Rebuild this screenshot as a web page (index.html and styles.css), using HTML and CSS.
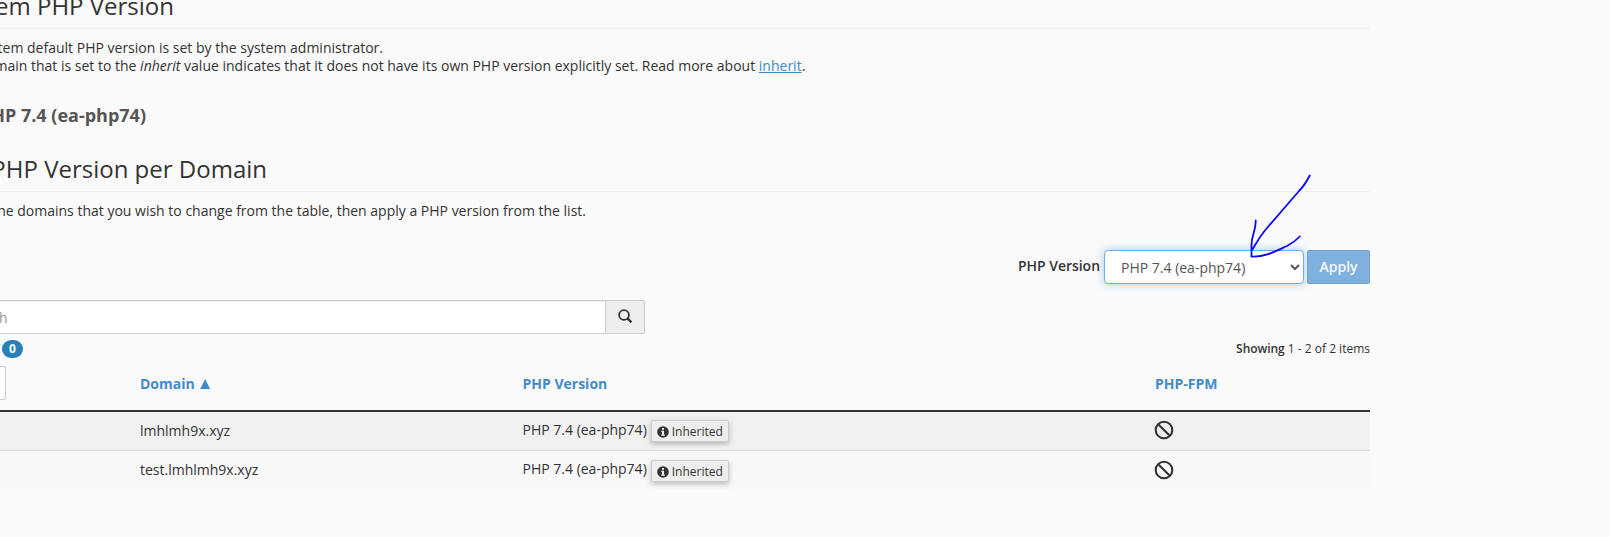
FILE: index.html
```html
<!DOCTYPE html>
<html lang="en">
<head>
<meta charset="utf-8">
<title>MultiPHP Manager</title>
<link rel="stylesheet" href="styles.css">
</head>
<body>
<main class="content">
  <h2 class="heading heading-system"><span>em PHP Version</span></h2>
  <p class="intro intro-default"><span>tem default PHP version is set by the system administrator.</span></p>
  <p class="intro intro-inherit"><span>main that is set to the <em>inherit</em> value indicates that it does not have its own PHP version explicitly set. Read more about <a href="#">inherit</a>.</span></p>
  <h4 class="current"><span>HP 7.4 (ea-php74)</span></h4>
  <h2 class="heading heading-domain"><span>PHP Version per Domain</span></h2>
  <p class="intro intro-select"><span>he domains that you wish to change from the table, then apply a PHP version from the list.</span></p>

  <div class="apply-bar">
    <label class="apply-label" for="version">PHP Version</label>
    <select class="version-select" id="version"><option>PHP 7.4 (ea-php74)</option></select>
    <button class="apply-button" type="button">Apply</button>
  </div>

  <div class="search">
    <div class="search-field"><span>h</span></div>
    <div class="search-button">
      <svg width="14" height="14" viewBox="0 0 14 14" fill="none" stroke="#333"><circle cx="6" cy="6" r="4.9" stroke-width="1.8"/><path d="M9.4 9.4l4 4" stroke-width="2.3"/></svg>
    </div>
  </div>

  <div class="status">
    <span class="badge">0</span>
    <span class="showing"><b>Showing</b> 1 - 2 of 2 items</span>
  </div>

  <div class="row table-head">
    <div class="cell"><div class="select-all"></div></div>
    <div class="cell">Domain <svg class="sort" width="11" height="10" viewBox="0 0 11 10"><path d="M5.2 0l4.9 10H.2z" fill="#428bca"/></svg></div>
    <div class="cell">PHP Version</div>
    <div class="cell">PHP-FPM</div>
  </div>
  <div class="row row-odd">
    <div class="cell"></div>
    <div class="cell">lmhlmh9x.xyz</div>
    <div class="cell version"><span>PHP 7.4 (ea-php74)</span>
      <span class="inherited"><svg width="12" height="12" viewBox="0 0 12 12"><circle cx="6" cy="6" r="5.8" fill="#333"/><path d="M5 2h2v1.7H5zM4.3 4.8H7v3.7h.8v1.2H4.3V8.5H5V6h-.7z" fill="#eee"/></svg>Inherited</span></div>
    <div class="cell fpm"><svg width="20" height="20" viewBox="0 0 20 20" fill="none" stroke="#333" stroke-width="2.1"><circle cx="10" cy="10" r="8.3"/><path d="M4.2 4.2l11.6 11.6"/></svg></div>
  </div>
  <div class="row row-even">
    <div class="cell"></div>
    <div class="cell">test.lmhlmh9x.xyz</div>
    <div class="cell version"><span>PHP 7.4 (ea-php74)</span>
      <span class="inherited"><svg width="12" height="12" viewBox="0 0 12 12"><circle cx="6" cy="6" r="5.8" fill="#333"/><path d="M5 2h2v1.7H5zM4.3 4.8H7v3.7h.8v1.2H4.3V8.5H5V6h-.7z" fill="#eee"/></svg>Inherited</span></div>
    <div class="cell fpm"><svg width="20" height="20" viewBox="0 0 20 20" fill="none" stroke="#333" stroke-width="2.1"><circle cx="10" cy="10" r="8.3"/><path d="M4.2 4.2l11.6 11.6"/></svg></div>
  </div>
</main>
<svg class="arrow" width="70" height="90" viewBox="1245 170 70 90" fill="none" stroke="#0d05fa" stroke-width="1.8" stroke-linecap="round" stroke-linejoin="round"><path d="M1309.7 175.5C1306 183 1304 186 1299 191L1267 228C1260 236 1257 242 1252 250M1255.7 220.5C1256 231 1251.500 235 1251.500 245L1251.500 256.500C1266 257 1277 250.500 1287 246C1293 243 1296 240.500 1299.800 236.500"/></svg>
</body>
</html>
```
FILE: styles.css
```css
* { box-sizing: border-box; }
body {
  margin: 0;
  height: 537px;
  overflow: hidden;
  background: #fafafa;
  color: #333;
  font: 14px/18px "Open Sans", sans-serif;
}
.content { width: 1370px; }
a { color: #428bca; }
h2, h4, p { margin: 0; }

/* Lines scrolled off the left edge keep their right end in place */
.heading, .intro, .current, .search-field {
  display: flex;
  white-space: nowrap;
}
.heading > span, .intro > span, .current > span {
  display: flex;
  justify-content: flex-end;
  white-space: pre;
}
.heading {
  font-size: 24px;
  line-height: 26px;
  font-weight: 400;
  border-bottom: 1px solid #eee;
}
.heading-system { height: 29px; margin-bottom: 10px; align-items: flex-end; padding-bottom: 9px; }
.heading-system > span { width: 174px; }
.intro-default > span { width: 383px; }
.intro-inherit > span { display: block; margin-left: -5.500px; }
.current { padding-top: 30px; font-size: 18px; line-height: 20px; color: #555; font-weight: 700; }
.current > span { width: 146px; }
.heading-domain { margin-top: 31px; height: 36px; }
.heading-domain > span { width: 267px; }
.intro-select { margin-top: 10px; }
.intro-select > span { width: 586px; }

.apply-bar {
  display: flex;
  justify-content: flex-end;
  margin-top: 30px;
  height: 34px;
}
.apply-label { font-weight: 600; letter-spacing: -.03px; margin: 7px 4px 0 0; }
.version-select {
  width: 200px;
  height: 34px;
  margin-right: 3px;
  padding: 6px 12px;
  border: 1px solid #66afe9;
  border-radius: 4px;
  background: #fff;
  color: #555;
  font: inherit;
  box-shadow: 0 0 8px rgba(102, 175, 233, .6);
}
.apply-button {
  width: 63px;
  padding: 0;
  border: 1px solid #72a3cf;
  border-radius: 2px;
  background: #7eb1df;
  color: #f5f9fc;
  font: inherit;
  font-weight: 600;
}

.search { display: flex; width: 645px; height: 34px; margin-top: 16px; }
.search-field {
  flex: 1;
  padding: 8px 0;
  border: 1px solid #ccc;
  border-width: 1px 0;
  background: #fff;
  color: #999;
  box-shadow: inset 0 1px 1px rgba(0, 0, 0, .075);
}
.search-field span { margin-left: -1px; }
.search-button {
  display: flex;
  justify-content: center;
  width: 40px;
  padding-top: 8px;
  border: 1px solid #ccc;
  border-radius: 0 2px 2px 0;
  background: #eee;
}

.status {
  display: flex;
  justify-content: space-between;
  height: 26px;
  padding: 6px 0 0 2px;
}
.badge {
  width: 21px;
  height: 18px;
  border-radius: 9px;
  background: #2980b9;
  color: #fff;
  font-size: 12px;
  font-weight: 700;
  text-align: center;
}
.showing { font-size: 12px; }
.showing b { font-weight: 600; letter-spacing: -.05px; }

.row { display: grid; grid-template-columns: 140px 382.500px 632.500px 215px; }
.table-head {
  height: 52px;
  padding-top: 6px;
  border-bottom: 2px solid #333;
  color: #428bca;
  font-weight: 700;
}
.table-head .cell { padding-top: 9px; }
.table-head .cell:first-child { padding: 0; }
.sort { margin-left: 2px; }
.select-all {
  width: 6px;
  height: 34px;
  border: 1px solid #ccc;
  border-left: 0;
  border-radius: 0 3px 3px 0;
  background: #fff;
}
.row-odd { height: 38px; padding-top: 10px; background: #f0f0f0; }
.row-even { height: 39px; padding-top: 10px; border-top: 1px solid #ddd; background: #f8f8f8; }
.version { display: flex; margin-top: -1px; }
.inherited {
  display: flex;
  align-items: center;
  gap: 3px;
  width: 78px;
  height: 22px;
  margin: -1px 0 0 4px;
  padding: 2px 0 0 5px;
  border: 1px solid #ccc;
  border-radius: 2px;
  background: #eee;
  font-size: 12px;
  box-shadow: 0 2px 5px rgba(0, 0, 0, .25);
}
.inherited svg { margin-top: -1px; }
.row-even .inherited { margin-top: 0; }
.fpm svg { display: block; margin-top: -2px; margin-left: -1px; }
.row-even .fpm svg { margin-top: -1px; }

/* Freehand annotation over the version selector */
.arrow { position: absolute; left: 1245px; top: 170px; }
```
